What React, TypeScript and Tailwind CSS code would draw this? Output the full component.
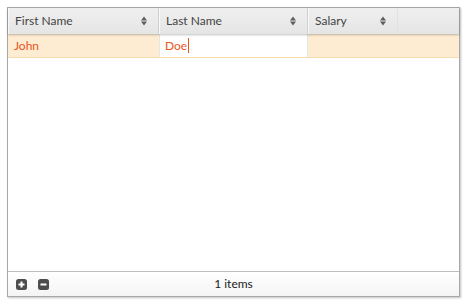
import React from 'react';

const columns = [
  { name: 'First Name', width: 'w-[151px]', edge: 'border-r-[#d0d0d0]' },
  { name: 'Last Name', width: 'w-[149px]', edge: 'border-r-[#d0d0d0]' },
  { name: 'Salary', width: 'w-[90px]', edge: 'border-r-[#e2e2e2]' },
];

const SortIcon = () => (
  <svg width="6" height="10" viewBox="0 0 6 10" className="shrink-0">
    <path d="M3 0.5 L6 4.5 H0 Z" fill="#5e5e5e" />
    <path d="M3 9.5 L6 5.5 H0 Z" fill="#5e5e5e" />
  </svg>
);

const SquareButton = ({ minus }: { minus?: boolean }) => (
  <svg width="11" height="11" viewBox="0 0 11 11">
    <rect x="0" y="0" width="11" height="11" rx="2.5" fill="#4d4d4d" />
    <rect x="2.5" y="4.5" width="6" height="2" fill="#fff" />
    {!minus && <rect x="4.5" y="2.5" width="2" height="6" fill="#fff" />}
  </svg>
);

export default function App() {
  return (
    <div className="w-[470px] h-[306px] bg-white pt-[7px] pl-[7px] font-['Lato',sans-serif]">
      <div className="w-[453px] h-[290px] border border-[#a8a8a8] flex flex-col bg-white shadow-[1px_1px_2px_rgba(0,0,0,0.25)]">
        {/* header */}
        <div className="flex h-[26px] bg-gradient-to-b from-[#efefef] to-[#e5e5e5] shadow-[0_1px_2px_rgba(0,0,0,0.25)] relative z-10">
          {columns.map((c) => (
            <div
              key={c.name}
              className={`${c.width} ${c.edge} flex items-center justify-between pl-[6px] pr-[11px] border-r border-l border-l-[#f8f8f8]`}
            >
              <span className="text-[12px] text-[#444]">{c.name}</span>
              <SortIcon />
            </div>
          ))}
          <div className="flex-1" />
        </div>
        {/* row */}
        <div className="flex h-[24px] bg-[#fdebd2] border-b border-[#f7dcae] text-[12px] text-[#e8561b]">
          <div className="w-[151px] pl-[6px] flex items-center">John</div>
          <div className="w-[149px] bg-white border-l border-r border-[#e6e6e6] pl-[5px] flex items-center">
            Doe<span className="inline-block w-px h-[15px] bg-[#e8561b] ml-px" />
          </div>
          <div className="flex-1" />
        </div>
        <div className="flex-1" />
        {/* footer */}
        <div className="h-[25px] border-t border-[#bdbdbd] flex items-center relative bg-gradient-to-b from-white to-[#f4f4f4]">
          <div className="flex items-center gap-[11px] pl-[8px]">
            <SquareButton />
            <SquareButton minus />
          </div>
          <span className="absolute left-0 right-0 text-center text-[12px] text-[#222]">1 items</span>
        </div>
      </div>
    </div>
  );
}
